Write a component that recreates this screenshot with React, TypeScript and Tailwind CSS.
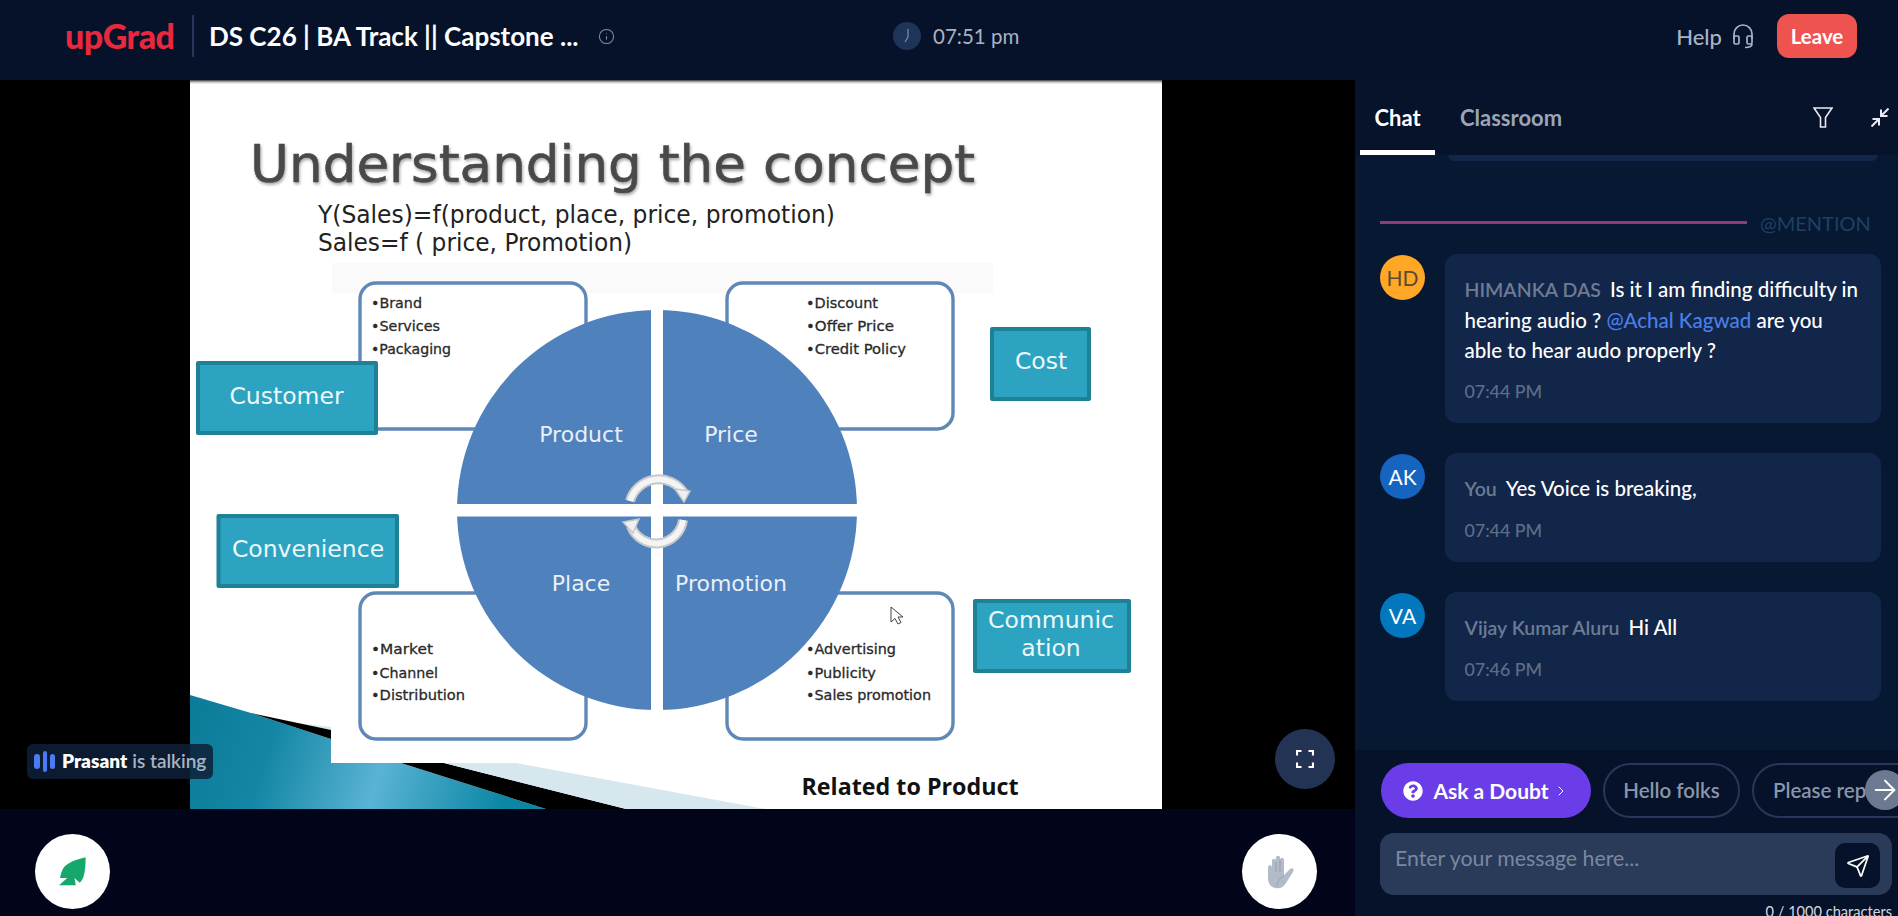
import { ArrowRight, ChevronRight, Info, Send } from "lucide-react";
import { FaQuestionCircle } from "react-icons/fa";

const UI = "font-['Lato','Noto_Sans',sans-serif]";
const SLIDE_FONT = "DejaVu Sans, Verdana, sans-serif";

function TealBox({ x, y, w, h }: { x: number; y: number; w: number; h: number }) {
  return (
    <g>
      <rect x={x} y={y} width={w} height={h} rx={2} fill="#1f8198" />
      <rect x={x + 4} y={y + 4} width={w - 8} height={h - 8} fill="#2ca3c0" />
    </g>
  );
}

function Lines({ x, ys, items }: { x: number; ys: number[]; items: [string, number][] }) {
  return (
    <g fill="#2a2a2a" stroke="#2a2a2a" strokeWidth={0.3} fontSize={14.5} fontFamily={SLIDE_FONT}>
      {items.map(([t, w], i) => (
        <text key={t} x={x} y={ys[i]} textLength={w} lengthAdjust="spacingAndGlyphs">
          •{t}
        </text>
      ))}
    </g>
  );
}

function Slide() {
  const outline = { fill: "#fff", stroke: "#5f88b6", strokeWidth: 3.4 };
  const label = { fill: "#e9eff7", fontSize: 22, fontFamily: SLIDE_FONT, textAnchor: "middle" as const };
  const teal = { fill: "#eef8fb", fontSize: 23.5, fontFamily: SLIDE_FONT, textAnchor: "middle" as const };
  return (
    <svg viewBox="190 80 972 729" className="ml-[190px] block h-[729px] w-[972px] shrink-0">
      <defs>
        <linearGradient id="ribbon" x1="190" y1="700" x2="540" y2="810" gradientUnits="userSpaceOnUse">
          <stop offset="0" stopColor="#0a7c98" />
          <stop offset="0.25" stopColor="#1587a6" />
          <stop offset="0.55" stopColor="#5ab3d4" />
          <stop offset="0.9" stopColor="#0b86a5" />
        </linearGradient>
        <linearGradient id="topShade" x1="0" y1="0" x2="0" y2="1">
          <stop offset="0" stopColor="#333" />
          <stop offset="1" stopColor="#fff" stopOpacity="0" />
        </linearGradient>
        <filter id="soft" x="-5%" y="-20%" width="110%" height="140%">
          <feDropShadow dx="1" dy="2" stdDeviation="1.4" floodColor="#000" floodOpacity="0.35" />
        </filter>
      </defs>
      <rect x="190" y="80" width="972" height="729" fill="#fff" />
      <rect x="190" y="80" width="972" height="5" fill="url(#topShade)" />

      <polygon points="290,722 331,727 331,731" fill="#d6e7ed" />
      <polygon points="190,695 251,713 331,739 331,809 190,809" fill="url(#ribbon)" />
      <polygon points="331,739 331,763 401,763 546,809 331,809" fill="url(#ribbon)" />
      <polygon points="251,713 331,730 331,739" fill="#000" />
      <polygon points="401,763 444,763 626,809 546,809" fill="#000" />
      <polygon points="444,763 516,763 766,809 626,809" fill="#d6e7ed" />
      <rect x="332" y="263" width="661" height="30" fill="#fafafa" />

      <text x="250" y="182" fontSize="52" fill="#4a4a4a" stroke="#4a4a4a" strokeWidth="0.6" fontFamily={SLIDE_FONT} textLength="725" lengthAdjust="spacingAndGlyphs" filter="url(#soft)">
        Understanding the concept
      </text>
      <text x="318" y="222.5" fontSize="24" fill="#222" fontFamily={SLIDE_FONT} textLength="517" lengthAdjust="spacingAndGlyphs">
        Y(Sales)=f(product, place, price, promotion)
      </text>
      <text x="318" y="250.5" fontSize="24" fill="#222" fontFamily={SLIDE_FONT} textLength="314" lengthAdjust="spacingAndGlyphs">
        Sales=f ( price, Promotion)
      </text>

      <rect x="360" y="283" width="226" height="146" rx="16" {...outline} />
      <rect x="727" y="283" width="226" height="146" rx="16" {...outline} />
      <rect x="360" y="593" width="226" height="146" rx="16" {...outline} />
      <rect x="727" y="593" width="226" height="146" rx="16" {...outline} />

      <Lines x={371} ys={[307.5, 331, 354]} items={[["Brand", 51], ["Services", 69], ["Packaging", 80]]} />
      <Lines x={806} ys={[307.5, 331, 354]} items={[["Discount", 72], ["Offer Price", 88], ["Credit Policy", 100]]} />
      <Lines x={371} ys={[654, 677.5, 700]} items={[["Market", 62], ["Channel", 67], ["Distribution", 94]]} />
      <Lines x={806} ys={[654, 677.5, 700]} items={[["Advertising", 90], ["Publicity", 70], ["Sales promotion", 125]]} />

      <circle cx="657" cy="510" r="200" fill="#4f81bd" />
      <rect x="651" y="300" width="12" height="420" fill="#fff" />
      <rect x="450" y="504" width="414" height="12.5" fill="#fff" />

      <g fill="none" strokeLinecap="butt">
        <path d="M630 501 A30 30 0 0 1 684 493" stroke="#c6c8cb" strokeWidth="10" />
        <path d="M630 501 A30 30 0 0 1 684 493" stroke="#f4f4f4" strokeWidth="6" />
        <path d="M683 520 A27 27 0 0 1 631 526" stroke="#c6c8cb" strokeWidth="10" />
        <path d="M683 520 A27 27 0 0 1 631 526" stroke="#f4f4f4" strokeWidth="6" />
      </g>
      <polygon points="675,489 690,491 684,502" fill="#f0f0f0" stroke="#c6c8cb" strokeWidth="1.5" />
      <polygon points="623,522 639,519 633,533" fill="#f0f0f0" stroke="#c6c8cb" strokeWidth="1.5" />

      <text x="581" y="441.5" {...label}>Product</text>
      <text x="731" y="441.5" {...label}>Price</text>
      <text x="581" y="591" {...label}>Place</text>
      <text x="731" y="591" {...label}>Promotion</text>

      <TealBox x={196} y={361} w={182} h={74} />
      <TealBox x={990} y={327} w={101} h={74} />
      <TealBox x={216.5} y={514} w={182.5} h={74} />
      <TealBox x={973} y={599} w={158} h={74} />
      <text x="286.5" y="404" {...teal}>Customer</text>
      <text x="1041" y="369" {...teal}>Cost</text>
      <text x="308" y="556.5" {...teal}>Convenience</text>
      <text x="1051" y="627.5" {...teal}>Communic</text>
      <text x="1051" y="656" {...teal}>ation</text>

      <text x="801.5" y="795" fontSize="24" fontWeight="700" fill="#111" fontFamily="Open Sans, sans-serif" textLength="217" lengthAdjust="spacingAndGlyphs">
        Related to Product
      </text>
      <path d="M891 607 L891 622 L895 618.5 L898 624 L901 622.5 L898 617 L903 617 Z" fill="#fff" stroke="#444" strokeWidth="1" />
    </svg>
  );
}

function Message({
  initials,
  color,
  initialsClass,
  name,
  time,
  children,
}: {
  initials: string;
  color: string;
  initialsClass: string;
  name: string;
  time: string;
  children: React.ReactNode;
}) {
  return (
    <div className="flex items-start gap-[20px]">
      <div className={`mt-[1px] flex h-[45px] w-[45px] shrink-0 items-center justify-center rounded-full text-[21px] ${color} ${initialsClass}`}>
        {initials}
      </div>
      <div className="flex-1 rounded-[12px] bg-[#12264a] pt-[20px] pr-[19.5px] pb-[22px] pl-[19.5px]">
        <p className="text-[20.5px] leading-[30px] font-medium text-white">
          <span className="mr-[9px] text-[19.5px] font-semibold text-[#6d7b93]">{name}</span>
          {children}
        </p>
        <div className="mt-[16px] text-[17.8px] leading-[20px] font-medium text-[#5f6e87]">{time}</div>
      </div>
    </div>
  );
}

export default function App() {
  return (
    <div className={`flex h-screen w-screen flex-col overflow-hidden bg-[#061229] ${UI}`}>
      <header className="flex h-[80px] shrink-0 items-center bg-[#061229] pb-[8px]">
        <div className="flex w-[893px] shrink-0 items-center">
          <div className="ml-[65px] w-[110px] text-[34px] leading-none font-black tracking-[-0.5px] whitespace-nowrap text-[#e8293d]">upGrad</div>
          <div className="ml-[17px] mr-[15px] h-[42px] w-[2px] bg-[#26375a]" />
          <h1 className="text-[26px] font-bold whitespace-nowrap text-white">DS C26 | BA Track || Capstone ...</h1>
          <Info className="ml-[19px] h-[17px] w-[17px] text-[#7f8ca3]" strokeWidth={1.5} />
        </div>
        <div className="flex items-center gap-[12px]">
          <svg viewBox="0 0 28 28" className="h-[28px] w-[28px]">
            <circle cx="14" cy="14" r="14" fill="#1f3459" />
            <path d="M15 7 L15 15 L12 20" stroke="#7f8ca3" strokeWidth="1.2" fill="none" />
          </svg>
          <span className="text-[20.5px] text-[#a9b3c4]">07:51 pm</span>
        </div>
        <div className="ml-auto flex items-center">
          <span className="text-[22px] font-medium text-[#a9b3c4]">Help</span>
          <svg viewBox="0 0 24 26" fill="none" stroke="#a9b3c4" strokeWidth="1.7" className="ml-[9px] h-[26px] w-[24px]">
            <path d="M3 16 V11 A9 9 0 0 1 21 11 V16" />
            <rect x="3" y="13" width="5" height="8" rx="1.5" />
            <rect x="16" y="13" width="5" height="8" rx="1.5" />
            <path d="M21 21 C21 24 18 24.5 14 24.5" />
          </svg>
          <button className="mr-[41px] ml-[22px] h-[44px] w-[80px] rounded-[12px] bg-[#ef5350] text-[20.5px] font-bold text-white">Leave</button>
        </div>
      </header>

      <div className="flex min-h-0 flex-1">
        <div className="flex w-[1355px] shrink-0 flex-col">
          <div className="relative flex h-[729px] shrink-0 overflow-hidden bg-black">
            <Slide />
            <div className="absolute top-[664px] left-[27px] flex h-[35px] w-[186px] items-center rounded-[6px] bg-[#0e2038]/85 pl-[7px] text-[19px]">
              <div className="mr-[7px] flex items-center gap-[3px]">
                <span className="h-[15px] w-[6px] rounded-full bg-[#4a7cf7]" />
                <span className="h-[21px] w-[4px] rounded-full bg-[#4a7cf7]" />
                <span className="h-[15px] w-[5px] rounded-full bg-[#4a7cf7]" />
              </div>
              <span className="font-extrabold text-white">Prasant</span>
              <span className="ml-[5px] font-semibold text-[#a8b3c5]">is talking</span>
            </div>
            <button className="absolute top-[649px] left-[1275px] flex h-[60px] w-[60px] items-center justify-center rounded-full bg-[#223354]">
              <svg viewBox="0 0 18 18" fill="none" stroke="#fff" strokeWidth="2.2" className="h-[18px] w-[18px]">
                <path d="M1 5.5 V1 H5.5 M12.5 1 H17 V5.5 M17 12.5 V17 H12.5 M5.5 17 H1 V12.5" />
              </svg>
            </button>
          </div>
          <div className="flex flex-1 items-start justify-between bg-[#02051a] pt-[25px] pr-[38px] pl-[35px]">
            <button className="flex h-[75px] w-[75px] items-center justify-center rounded-full bg-white">
              <svg viewBox="165 415 82 86" className="h-[29px] w-[27px]">
                <path d="M246 415 C215 422 190 432 178 448 C172 458 170 468 168 478 L190 478 L165 500 L216 500 L212 478 L228 492 C240 482 245 465 246 415 Z" fill="#16a86b" />
              </svg>
            </button>
            <button className="flex h-[75px] w-[75px] items-center justify-center rounded-full bg-white">
              <svg viewBox="0 0 28 34" className="h-[34px] w-[28px]">
                <path d="M2 13 C2 9 6 9 6 13 L6 6 C6 3 10 3 10 6 L10 3 C10 0 14 0 14 3 L14 5 C14 2 18 2 18 5 L18 20 L24 14 C26 12 29 14 27 17 L20 28 C17 33 13 34 9 33 C4 32 2 28 2 23 Z" fill="#b3bbc8" />
                <path d="M10 7 V17 M14 5 V17 M11 31 C11 26 14 23 18 21" stroke="#8b94a5" strokeWidth="0.7" fill="none" />
              </svg>
            </button>
          </div>
        </div>

        <aside className="flex min-w-0 flex-1 flex-col bg-[#071833]">
          <div className="flex h-[75px] shrink-0 items-start bg-[#07122b]">
            <div className="ml-[5px] flex h-[75px] w-[75px] items-center justify-center border-b-[5px] border-white pt-[4px] text-[22px] font-bold text-white">Chat</div>
            <div className="ml-[25px] flex h-[75px] items-center text-[22px] font-bold text-[#9aa5b8]">Classroom</div>
            <svg viewBox="0 0 20 21" fill="none" stroke="#e8ebf0" strokeWidth="1.6" className="mt-[27px] ml-auto h-[21px] w-[20px]">
              <path d="M1 1 H19 L12.5 10.5 V20 H7.5 V10.5 Z" />
            </svg>
            <svg viewBox="0 0 18 19" fill="none" stroke="#e8ebf0" strokeWidth="2" className="mt-[28px] mr-[9px] ml-[38px] h-[19px] w-[18px]">
              <path d="M17.5 0.5 L10 8 M10 1.5 V8 H16.5 M0.5 18.5 L8 11 M1.5 11 H8 V17.5" />
            </svg>
          </div>
          <div className="ml-[93px] h-[6px] w-[430px] shrink-0 rounded-b-[8px] bg-[#12264a]" />
          <div className="flex min-h-0 flex-1 flex-col bg-[#071833] pr-[17px] pl-[25px]">
            <div className="mt-[49px] mb-[20px] flex h-[24px] shrink-0 items-center gap-[13px]">
              <div className="h-[3px] w-[367px] bg-[#93397f]" />
              <span className="pt-[1px] text-[20px] text-[#1f4060]">@MENTION</span>
            </div>
            <div className="flex flex-col gap-[30px]">
              <Message initials="HD" color="bg-[#ffa726]" initialsClass="text-[#5c4a2e]" name="HIMANKA DAS" time="07:44 PM">
                Is it I am finding difficulty in hearing audio ? <span className="text-[#4a7fe8]">@Achal Kagwad</span> are you able to hear audo properly ?
              </Message>
              <Message initials="AK" color="bg-[#1565c0]" initialsClass="text-white" name="You" time="07:44 PM">
                Yes Voice is breaking,
              </Message>
              <Message initials="VA" color="bg-[#0277bd]" initialsClass="text-white" name="Vijay Kumar Aluru" time="07:46 PM">
                Hi All
              </Message>
            </div>
          </div>
          <div className="relative h-[166px] shrink-0 overflow-hidden bg-[#061229]">
            <div className="mt-[13px] flex h-[55px] items-center gap-[12px] pl-[26px]">
              <button className="flex h-[55px] w-[210px] shrink-0 items-center justify-center rounded-full bg-[#6a3de8] text-[21px] font-bold text-white">
                <FaQuestionCircle className="mr-[10px] h-[20px] w-[20px]" />
                Ask a Doubt
                <ChevronRight className="ml-[4px] h-[16px] w-[16px]" strokeWidth={1.5} />
              </button>
              <div className="flex h-[55px] w-[137px] shrink-0 items-center justify-center rounded-full border-2 border-[#26375a] text-[20.5px] font-semibold text-[#8a96aa]">Hello folks</div>
              <div className="flex h-[55px] w-[200px] shrink-0 items-center rounded-full border-2 border-[#26375a] pl-[19px] text-[20.5px] font-semibold whitespace-nowrap text-[#8a96aa]">Please repeat</div>
            </div>
            <div className="absolute top-[20px] left-[510px] flex h-[40px] w-[40px] items-center justify-center rounded-full bg-[#6b7a90]">
              <ArrowRight className="h-[32px] w-[32px] text-white" strokeWidth={1.5} />
            </div>
            <div className="mt-[15px] ml-[25px] flex h-[62px] w-[512px] items-start justify-between rounded-[14px] bg-[#2a3a59] pt-[10px] pr-[12px] pl-[15px] text-[21.3px] text-[#7a88a0]">
              <span>Enter your message here...</span>
              <div className="flex h-[45px] w-[45px] items-center justify-center rounded-[10px] bg-[#061229]">
                <Send className="h-[24px] w-[24px] text-white" strokeWidth={1.75} />
              </div>
            </div>
            <div className="mt-[7px] pr-[6px] text-right text-[14.6px] leading-[20px] text-[#d5d9e0]">0 / 1000 characters</div>
          </div>
        </aside>
      </div>
    </div>
  );
}
